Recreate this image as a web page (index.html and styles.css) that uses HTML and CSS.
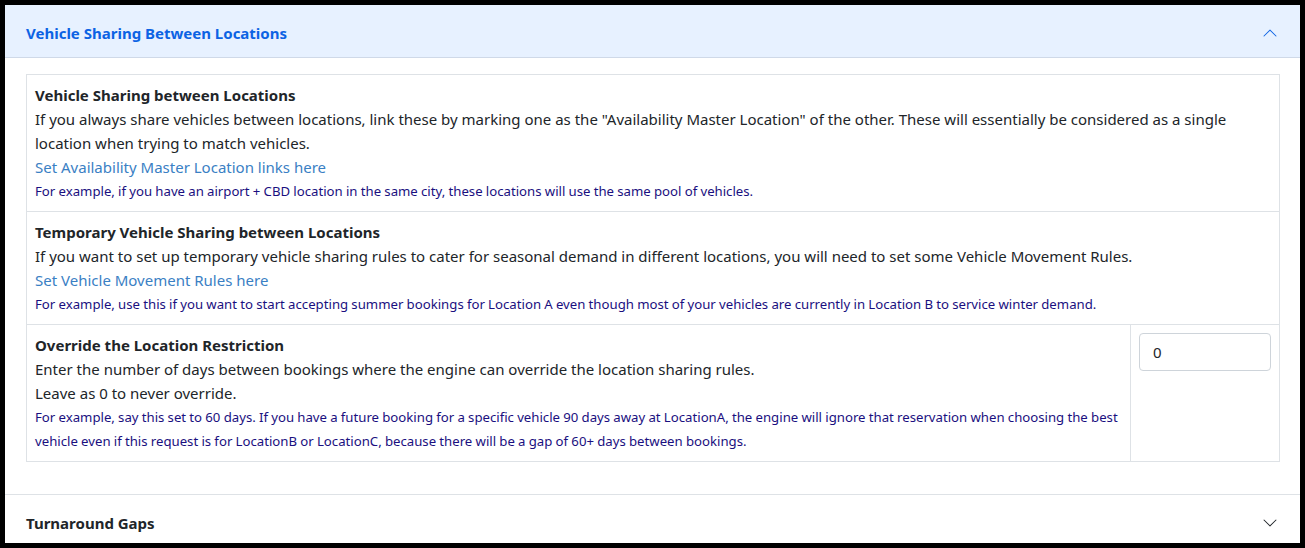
FILE: index.html
```html
<!DOCTYPE html>
<html>

<head>
  <meta charset="UTF-8" />
  <title>Vehicle Sharing Between Locations</title>
  <link rel="stylesheet" href="styles.css">
</head>

<body>

  <div class="frame">
    <div class="accordion">

      <div class="accordion-item">
        <div class="accordion-header open">
          <span>Vehicle Sharing Between Locations</span>
          <svg class="chevron up" viewBox="0 0 16 16" width="16" height="16">
            <path fill="currentColor" fill-rule="evenodd" d="M1.646 4.646a.5.5 0 0 1 .708 0L8 10.293l5.646-5.647a.5.5 0 0 1 .708.708l-6 6a.5.5 0 0 1-.708 0l-6-6a.5.5 0 0 1 0-.708z"/>
          </svg>
        </div>

        <div class="accordion-body">
          <table class="settings">
            <tr>
              <td colspan="2">
                <div class="title">Vehicle Sharing between Locations</div>
                <div>If you always share vehicles between locations, link these by marking one as the "Availability Master Location" of the other. These will essentially be considered as a single location when trying to match vehicles.</div>
                <div><a href="#">Set Availability Master Location links here</a></div>
                <div class="hint">For example, if you have an airport + CBD location in the same city, these locations will use the same pool of vehicles.</div>
              </td>
            </tr>
            <tr>
              <td colspan="2">
                <div class="title">Temporary Vehicle Sharing between Locations</div>
                <div>If you want to set up temporary vehicle sharing rules to cater for seasonal demand in different locations, you will need to set some Vehicle Movement Rules.</div>
                <div><a href="#">Set Vehicle Movement Rules here</a></div>
                <div class="hint">For example, use this if you want to start accepting summer bookings for Location A even though most of your vehicles are currently in Location B to service winter demand.</div>
              </td>
            </tr>
            <tr>
              <td>
                <div class="title">Override the Location Restriction</div>
                <div>Enter the number of days between bookings where the engine can override the location sharing rules.</div>
                <div>Leave as 0 to never override.</div>
                <div class="hint">For example, say this set to 60 days. If you have a future booking for a specific vehicle 90 days away at LocationA, the engine will ignore that reservation when choosing the best vehicle even if this request is for LocationB or LocationC, because there will be a gap of 60+ days between bookings.</div>
              </td>
              <td class="input-cell">
                <input type="text" class="form-control" value="0">
              </td>
            </tr>
          </table>
        </div>
      </div>

      <div class="accordion-item">
        <div class="accordion-header">
          <span>Turnaround Gaps</span>
          <svg class="chevron" viewBox="0 0 16 16" width="16" height="16">
            <path fill="currentColor" fill-rule="evenodd" d="M1.646 4.646a.5.5 0 0 1 .708 0L8 10.293l5.646-5.647a.5.5 0 0 1 .708.708l-6 6a.5.5 0 0 1-.708 0l-6-6a.5.5 0 0 1 0-.708z"/>
          </svg>
        </div>
      </div>

    </div>
  </div>

</body>

</html>
```

FILE: styles.css
```css
* {
  box-sizing: border-box;
}

body {
  margin: 0;
  background-color: #000000;
  font-family: "Noto Sans", "Open Sans", sans-serif;
  font-size: 15px;
  line-height: 24px;
  color: #212529;
}

.frame {
  margin: 5px;
  height: 538px;
  overflow: hidden;
  background-color: #ffffff;
}

.accordion-item {
  border-bottom: 1px solid #dee2e6;
}

.accordion-header {
  display: flex;
  align-items: center;
  justify-content: space-between;
  padding: 16px 22px 12px 21px;
  font-weight: 700;
  color: #212529;
}

.accordion-header.open {
  background-color: #e7f1ff;
  color: #0c63e4;
  border-bottom: 1px solid #cfd9e8;
}

.chevron {
  display: block;
}

.chevron.up {
  transform: rotate(180deg);
}

.accordion-body {
  padding: 16px 20px 32px 21px;
}

.settings {
  width: 100%;
  border-collapse: collapse;
}

.settings td {
  border: 1px solid #dee2e6;
  padding: 8px;
  vertical-align: top;
}

.settings .title {
  font-weight: 700;
}

.settings a {
  color: #3a80c4;
  text-decoration: none;
}

.settings .hint {
  font-size: 13.2px;
  word-spacing: -0.2px;
  color: #1a0f80;
}

.settings .input-cell {
  width: 149px;
}

.form-control {
  display: block;
  width: 100%;
  height: 38px;
  padding: 6px 13px;
  font-family: inherit;
  font-size: 15px;
  color: #212529;
  border: 1px solid #ced4da;
  border-radius: 4px;
}
```
